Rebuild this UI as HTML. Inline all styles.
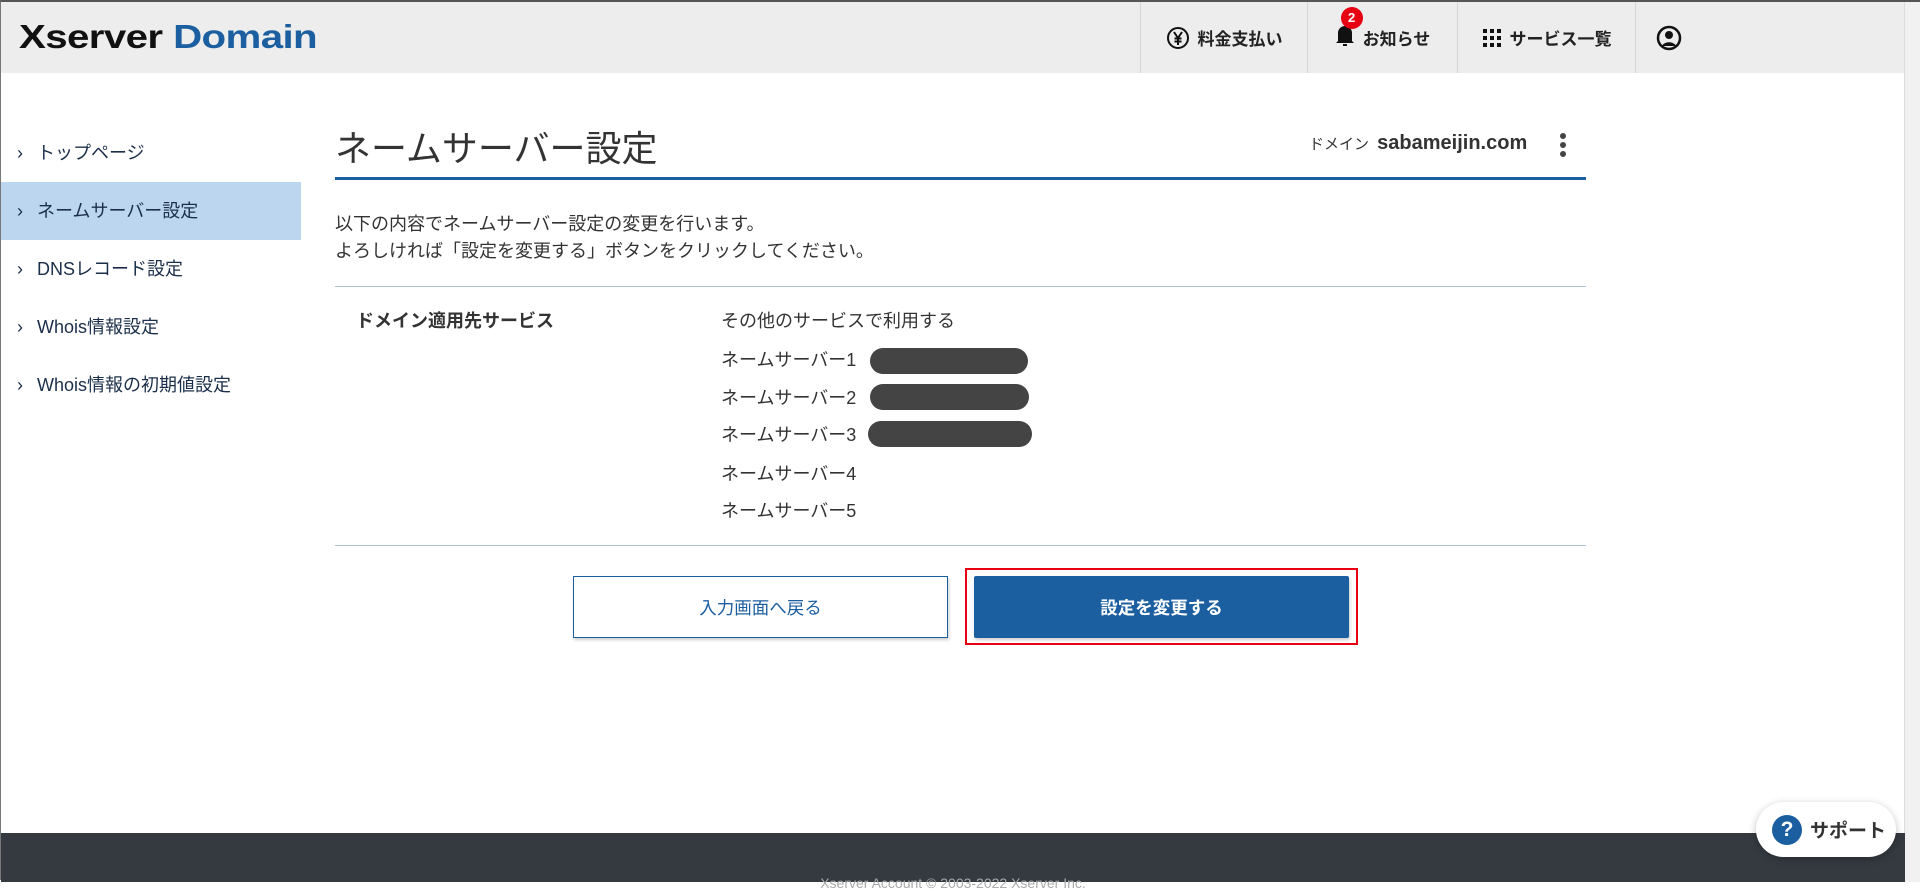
<!DOCTYPE html>
<html><head><meta charset="utf-8"><style>
*{box-sizing:border-box;margin:0;padding:0}
body{width:1920px;height:880px;overflow:hidden;background:#fff;font-family:"Liberation Sans","Noto Sans CJK JP",sans-serif;color:#333;position:relative;border-left:1px solid #777;border-top:2px solid #555}
.hdr{position:absolute;left:0;top:0;width:1904px;height:71px;background:#ededed}
.logo{position:absolute;left:18px;top:16px;font-size:33px;font-weight:bold;letter-spacing:-0.5px;color:#111;transform:scaleX(1.22);transform-origin:left}
.logo span{color:#1c5fa0}
.nav{position:absolute;top:0;height:71px;display:flex;align-items:center;justify-content:center;border-left:1px solid #d5d5d5;font-size:17px;font-weight:bold;color:#222}
.scroll{position:absolute;right:0;top:0;width:16px;height:880px;background:#f1f1f1;border-left:1px solid #ddd}
.side{position:absolute;left:0;top:122px;width:300px}
.side div{height:58px;line-height:58px;padding-left:16px;font-size:18px;color:#1b2f4a}
.side div.on{background:#bcd6ef}
.side b{font-weight:normal;display:inline-block;width:20px}
h1{position:absolute;left:334px;top:118px;font-size:36px;font-weight:normal;color:#333}
.bl{position:absolute;left:334px;top:175px;width:1251px;height:3px;background:#1c5fa0}
.dom{position:absolute;left:1308px;top:130px;font-size:15px;color:#333}
.dom b{font-size:20px;color:#333;margin-left:4px}
.hr{position:absolute;left:334px;width:1251px;height:1px;background:#a9c0d6}
.t{position:absolute;font-size:18px;color:#333}
.pill{position:absolute;height:26px;border-radius:13px;background:#444}
.btn{position:absolute;top:574px;height:62px;width:375px;display:flex;align-items:center;justify-content:center;font-size:17.5px}
.foot{position:absolute;left:0;top:831px;width:1904px;height:49px;background:#343a40;color:#aaa;font-size:14px;text-align:center;padding-top:42px}
.sup{position:absolute;left:1755px;top:800px;width:140px;height:55px;background:#fff;border-radius:28px;box-shadow:0 2px 8px rgba(0,0,0,.25);display:flex;align-items:center;padding-left:16px;font-size:19px;font-weight:bold;color:#333}
.sup i{display:inline-flex;width:30px;height:30px;border-radius:50%;background:#1c5fa0;color:#fff;font-style:normal;align-items:center;justify-content:center;font-size:21px;margin-right:8px}
</style></head><body>
<div class="hdr">
<div class="logo">Xserver <span>Domain</span></div>
<div class="nav" style="left:1139px;width:167px"><svg width="24" height="24" viewBox="0 0 24 24" style="margin-right:8px"><circle cx="12" cy="12" r="10" fill="none" stroke="#111" stroke-width="2"/><path d="M8 6l4 6 4-6M12 12v7M8.5 12.5h7M8.5 15.5h7" fill="none" stroke="#111" stroke-width="2"/></svg>料金支払い</div>
<div class="nav" style="left:1306px;width:150px"><span style="position:relative;margin-right:8px"><svg width="20" height="24" viewBox="0 0 20 24"><path d="M3 18V10a7 7 0 0 1 14 0v8l2 2H1z M8 21h4v2H8z" fill="#111"/></svg><span style="position:absolute;left:6px;top:-16px;width:22px;height:22px;border-radius:50%;background:#e60012;color:#fff;font-size:13px;text-align:center;line-height:22px">2</span></span>お知らせ</div>
<div class="nav" style="left:1456px;width:178px"><svg width="20" height="20" viewBox="0 0 20 20" style="margin-right:8px" fill="#111"><rect x="1" y="1" width="4" height="4"/><rect x="8" y="1" width="4" height="4"/><rect x="15" y="1" width="4" height="4"/><rect x="1" y="8" width="4" height="4"/><rect x="8" y="8" width="4" height="4"/><rect x="15" y="8" width="4" height="4"/><rect x="1" y="15" width="4" height="4"/><rect x="8" y="15" width="4" height="4"/><rect x="15" y="15" width="4" height="4"/></svg>サービス一覧</div>
<div class="nav" style="left:1634px;width:66px;justify-content:flex-start;padding-left:20px"><svg width="26" height="26" viewBox="0 0 26 26"><circle cx="13" cy="13" r="11" fill="none" stroke="#111" stroke-width="2.5"/><circle cx="13" cy="10" r="4" fill="#111"/><path d="M6 21c2-5 12-5 14 0" fill="#111"/></svg></div>
</div>
<div class="scroll"></div>
<div class="side">
<div><b>›</b>トップページ</div>
<div class="on"><b>›</b>ネームサーバー設定</div>
<div><b>›</b>DNSレコード設定</div>
<div><b>›</b>Whois情報設定</div>
<div><b>›</b>Whois情報の初期値設定</div>
</div>
<h1>ネームサーバー設定</h1>
<div class="dom">ドメイン <b>sabameijin.com</b></div>
<svg style="position:absolute;left:1557px;top:130px" width="10" height="28"><circle cx="5" cy="4" r="3" fill="#444"/><circle cx="5" cy="13" r="3" fill="#444"/><circle cx="5" cy="22" r="3" fill="#444"/></svg>
<div class="bl"></div>
<div class="t" style="left:334px;top:208px">以下の内容でネームサーバー設定の変更を行います。</div>
<div class="t" style="left:334px;top:235px">よろしければ「設定を変更する」ボタンをクリックしてください。</div>
<div class="hr" style="top:284px"></div>
<div class="t" style="left:355px;top:305px;font-weight:bold">ドメイン適用先サービス</div>
<div class="t" style="left:720px;top:305px">その他のサービスで利用する</div>
<div class="t" style="left:720px;top:344px">ネームサーバー1</div>
<div class="t" style="left:720px;top:382px">ネームサーバー2</div>
<div class="t" style="left:720px;top:419px">ネームサーバー3</div>
<div class="t" style="left:720px;top:458px">ネームサーバー4</div>
<div class="t" style="left:720px;top:495px">ネームサーバー5</div>
<div class="pill" style="left:869px;top:346px;width:158px"></div>
<div class="pill" style="left:869px;top:382px;width:159px"></div>
<div class="pill" style="left:867px;top:419px;width:164px"></div>
<div class="hr" style="top:543px"></div>
<div class="btn" style="left:572px;border:1px solid #1c5fa0;color:#1c5fa0;background:#fff;box-shadow:1px 2px 3px rgba(0,0,0,.2)">入力画面へ戻る</div>
<div style="position:absolute;left:964px;top:566px;width:393px;height:77px;border:2px solid #e60012"></div>
<div class="btn" style="left:973px;width:375px;background:#1c5fa0;color:#fff;font-weight:bold;border-radius:2px;box-shadow:1px 2px 3px rgba(0,0,0,.2)">設定を変更する</div>
<div class="foot">Xserver Account © 2003-2022 Xserver Inc.</div>
<div class="sup"><i>?</i>サポート</div>
</body></html>
